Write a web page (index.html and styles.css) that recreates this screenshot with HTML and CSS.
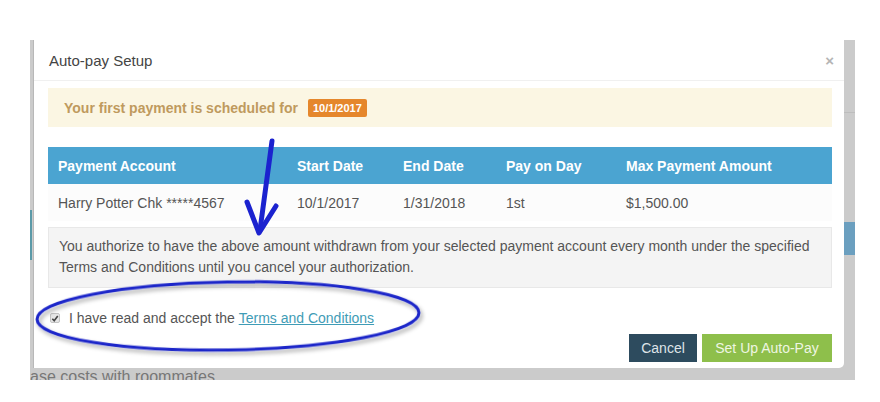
FILE: index.html
```html
<!DOCTYPE html>
<html lang="en">
<head>
    <meta charset="UTF-8">
    <meta name="viewport" content="width=device-width, initial-scale=1.0">
    <title>Auto-pay Setup</title>
    <link rel="stylesheet" href="styles.css">
</head>
<body>
    <div class="shot">
        <div class="modal">
            <div class="modal-header">
                <h4 class="modal-title">Auto-pay Setup</h4>
                <span class="close">&times;</span>
            </div>
            <div class="modal-body">
                <div class="alert">Your first payment is scheduled for <span class="badge">10/1/2017</span></div>

                <table class="schedule">
                    <colgroup>
                        <col class="c-account">
                        <col class="c-start">
                        <col class="c-end">
                        <col class="c-day">
                        <col>
                    </colgroup>
                    <thead>
                        <tr>
                            <th>Payment Account</th>
                            <th>Start Date</th>
                            <th>End Date</th>
                            <th>Pay on Day</th>
                            <th>Max Payment Amount</th>
                        </tr>
                    </thead>
                    <tbody>
                        <tr>
                            <td>Harry Potter Chk *****4567</td>
                            <td>10/1/2017</td>
                            <td>1/31/2018</td>
                            <td>1st</td>
                            <td>$1,500.00</td>
                        </tr>
                    </tbody>
                </table>

                <div class="well">
                    You authorize to have the above amount withdrawn from your selected payment account every month under the specified<br>
                    Terms and Conditions until you cancel your authorization.
                </div>

                <label class="accept">
                    <span class="check">
                        <svg width="9" height="9" viewBox="0 0 9 9"><path d="M1.5 4.8 L3.6 7 L7.6 1.8" fill="none" stroke="#444" stroke-width="1.8"/></svg>
                    </span>
                    I have read and accept the&nbsp;<a href="#">Terms and Conditions</a>
                </label>
            </div>
            <div class="modal-footer">
                <button class="btn btn-cancel">Cancel</button>
                <button class="btn btn-save">Set Up Auto-Pay</button>
            </div>
        </div>
        <p class="behind">ase costs with roommates</p>
    </div>

    <!-- hand drawn markup on top of the screenshot -->
    <svg class="markup" width="880" height="402" viewBox="0 0 880 402">
        <defs>
            <filter id="shade" x="-10%" y="-30%" width="120%" height="160%">
                <feDropShadow dx="2" dy="3" stdDeviation="2" flood-color="#000" flood-opacity="0.35"/>
            </filter>
        </defs>
        <ellipse cx="228" cy="316" rx="191" ry="34" transform="rotate(-1 228 316)" fill="none" stroke="#1b25c9" stroke-width="3" filter="url(#shade)"/>
        <g stroke="#1b22cf" stroke-width="5" stroke-linecap="round" stroke-linejoin="round" fill="none">
            <path d="M272 141 L260 230"/>
            <path d="M247 202 L259 233 L276 206"/>
        </g>
    </svg>
</body>
</html>
```

FILE: styles.css
```css
* {
    margin: 0;
    padding: 0;
    box-sizing: border-box;
}

body {
    font-family: "Liberation Sans", Arial, sans-serif;
    background: #fff;
    width: 880px;
    height: 402px;
    overflow: hidden;
    position: relative;
}

.shot {
    margin: 40px 0 0 30px;
    width: 825px;
    height: 340px;
    overflow: hidden;
    background:
        linear-gradient(#6b9fbf, #6b9fbf) right 0 top 182px / 11px 33px no-repeat,
        linear-gradient(#bdbdbd, #bdbdbd) right 0 top 72px / 11px 1px no-repeat,
        linear-gradient(#5b9aa8, #5b9aa8) left 0 top 170px / 2px 50px no-repeat,
        #cbcbcb;
}

.modal {
    margin-left: 3px;
    width: 811px;
    height: 328px;
    background: #fff;
    border-left: 1px solid #b8b8b8;
    border-radius: 0 0 5px 0;
    display: flex;
    flex-direction: column;
}

.modal-header {
    height: 41px;
    border-bottom: 1px solid #f0f0f0;
    padding: 0 10px 0 15px;
    display: flex;
    align-items: center;
    justify-content: space-between;
}

.modal-title {
    font-size: 15px;
    font-weight: normal;
    color: #444;
}

.close {
    font-size: 15px;
    font-weight: bold;
    color: #b5b5b5;
    line-height: 1;
}

.modal-body {
    padding: 7px 12px 0 14px;
}

.alert {
    height: 39px;
    background: #fbf6e3;
    color: #bf9a5e;
    font-size: 14px;
    font-weight: bold;
    padding-left: 16px;
    display: flex;
    align-items: center;
}

.badge {
    margin-left: 10px;
    background: #e5872c;
    color: #fff;
    font-size: 11px;
    font-weight: bold;
    height: 18px;
    line-height: 18px;
    padding: 0 5px;
    border-radius: 2px;
}

.schedule {
    margin-top: 20px;
    width: 100%;
    table-layout: fixed;
    border-collapse: collapse;
    font-size: 14px;
}

.c-account { width: 239px; }
.c-start { width: 106px; }
.c-end { width: 103px; }
.c-day { width: 120px; }

.schedule th {
    background: #4ba4d1;
    color: #fff;
    font-weight: bold;
    text-align: left;
    height: 37px;
    padding: 0 10px;
}

.schedule td {
    color: #555;
    height: 37px;
    padding: 0 10px;
    background: #fcfcfc;
}

.well {
    margin-top: 6px;
    height: 61px;
    background: #f4f4f4;
    border: 1px solid #e8e8e8;
    padding: 8px 0 0 10px;
    font-size: 14px;
    line-height: 21px;
    color: #555;
    white-space: nowrap;
}

.accept {
    margin-top: 20px;
    height: 20px;
    display: flex;
    align-items: center;
    font-size: 14px;
    color: #555;
}

.check {
    width: 10px;
    height: 10px;
    margin: 0 9px 0 2px;
    background: #e6e6e6;
    border: 1px solid #c4c4c4;
    border-radius: 2px;
    display: flex;
    align-items: center;
    justify-content: center;
}

.accept a {
    color: #3f9cb6;
    text-decoration: underline;
}

.modal-footer {
    padding: 6px 12px 6px 0;
    display: flex;
    justify-content: flex-end;
    gap: 5px;
}

.btn {
    height: 28px;
    border: none;
    font-family: inherit;
    font-size: 14px;
    padding: 0 10px;
    cursor: pointer;
}

.btn-cancel {
    width: 68px;
    background: #2d4b5e;
    color: #dfe4e8;
}

.btn-save {
    width: 130px;
    background: #8ebf4b;
    color: #eef6e2;
}

.behind {
    font-size: 16px;
    line-height: 18px;
    color: #777;
    margin-top: 0;
}

.markup {
    position: absolute;
    top: 0;
    left: 0;
    pointer-events: none;
}
```
